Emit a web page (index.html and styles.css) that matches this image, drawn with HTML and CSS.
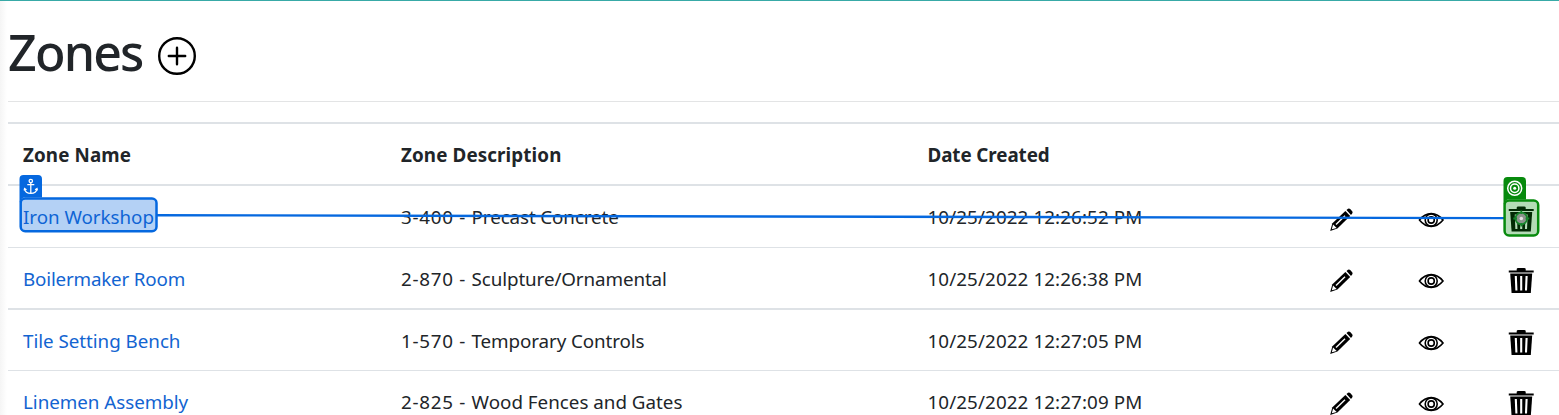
FILE: index.html
```html
<!DOCTYPE html>
<html lang="en">
<head>
<meta charset="utf-8">
<title>Zones</title>
<link rel="stylesheet" href="styles.css">
</head>
<body>
<svg class="defs" width="0" height="0" aria-hidden="true">
  <symbol id="pencil" viewBox="0 0 24 24">
    <path d="M1 23 3.2 15.2 16.2 3.1 21 8 8.2 20.5Z"/>
    <path d="M17.3 2.1 18.8.8Q19.9 0 21 1L23 3.2Q23.9 4.3 23 5.4L21.8 7Z"/>
    <path class="cut" d="M6.8 16.5 15.8 7.8" />
    <path class="hole" d="M3.9 16.6 7.4 19.9 2.6 21.3Z"/>
  </symbol>
  <symbol id="eye" viewBox="0 0 26 16">
    <path class="line" d="M1.2 8Q6.3 1.6 13 1.6T24.8 8Q19.7 14.4 13 14.4T1.2 8Z"/>
    <circle class="line" cx="13" cy="8" r="6"/>
    <circle class="line" cx="13" cy="8" r="3.1"/>
  </symbol>
  <symbol id="trash" viewBox="0 0 26 26">
    <path d="M.5 3H8.5V1.6Q8.5.5 10 .5H16Q17.5.5 17.5 1.6V3H25.5V5H.5Z"/>
    <path d="M2 6H24L22.6 25.5H3.4Z"/>
    <path class="cut" d="M7.6 8.5 8.2 23M13 8.5V23M18.4 8.5 17.8 23"/>
  </symbol>
</svg>
<main class="page">
  <header class="heading">
    <h1 class="title">Zones</h1>
    <svg class="add" viewBox="0 0 38 38"><circle cx="19" cy="19" r="17.8"/><path d="M19 10.8V27.2M10.8 19H27.2"/></svg>
  </header>
  <div class="table">
    <div class="row head"><span>Zone Name</span><span>Zone Description</span><span class="created">Date Created</span></div>
    <div class="row first"><a>Iron Workshop</a><span class="desc"><span class="code">3-400 - </span>Precast Concrete</span><span class="date">10/25/2022 12:26:52 PM</span><svg class="pencil"><use href="#pencil"/></svg><svg class="eye"><use href="#eye"/></svg><svg class="trash"><use href="#trash"/></svg></div>
    <div class="row second"><a class="tight">Boilermaker Room</a><span class="desc"><span class="code">2-870 - </span>Sculpture/Ornamental</span><span class="date">10/25/2022 12:26:38 PM</span><svg class="pencil"><use href="#pencil"/></svg><svg class="eye"><use href="#eye"/></svg><svg class="trash"><use href="#trash"/></svg></div>
    <div class="row third"><a>Tile Setting Bench</a><span class="desc"><span class="code">1-570 - </span>Temporary Controls</span><span class="date">10/25/2022 12:27:05 PM</span><svg class="pencil"><use href="#pencil"/></svg><svg class="eye"><use href="#eye"/></svg><svg class="trash"><use href="#trash"/></svg></div>
    <div class="row fourth"><a>Linemen Assembly</a><span><span class="code">2-825 - </span>Wood Fences and Gates</span><span class="date">10/25/2022 12:27:09 PM</span><svg class="pencil"><use href="#pencil"/></svg><svg class="eye"><use href="#eye"/></svg><svg class="trash"><use href="#trash"/></svg></div>
  </div>
</main>
<svg class="overlay" viewBox="0 0 1559 415">
  <path class="link" d="M157 215.2 1504 218.1"/>
  <rect class="anchor-box" x="20.7" y="198.6" width="135.8" height="32.6" rx="4.5"/>
  <path class="anchor-tab" d="M19.5 203V179Q19.5 175 23.5 175H38Q42 175 42 179V197.5H24Q21 198 19.5 203Z"/>
  <g class="anchor-icon"><circle cx="30.8" cy="181" r="1.7"/><path d="M30.8 182.8V193.3M27.3 184.7H34.3M24.6 188.8Q25.3 193.3 30.8 193.3T37 188.8M24.2 190.5 24.6 188.5 26.5 189.8M37.4 190.5 37 188.5 35.1 189.8"/></g>
  <rect class="target-box" x="1504.6" y="200.6" width="33.6" height="34.8" rx="4.5"/>
  <path class="target-tab" d="M1503.5 205V181Q1503.5 177 1507.5 177H1522Q1526 177 1526 181V199.5H1508Q1505 200 1503.5 205Z"/>
  <g class="target-icon"><circle cx="1514.7" cy="188.3" r="7"/><circle cx="1514.7" cy="188.3" r="4.2"/><circle class="dot" cx="1514.7" cy="188.3" r="1.5"/></g>
  <g class="marker"><circle cx="1521.3" cy="218.5" r="5.8"/><path d="M1521.3 210.5V214M1521.3 223V226.5M1513.3 218.5H1517M1525.6 218.5H1529.3"/><circle class="dot" cx="1521.3" cy="218.5" r="1.8"/></g>
</svg>
</body>
</html>
```
FILE: styles.css
```css
* { box-sizing: border-box; }
body {
  margin: 0;
  height: 415px;
  overflow: hidden;
  position: relative;
  border-top: 1px solid #38aaa7;
  background: linear-gradient(90deg, #f5f5f5, #fff 7px);
  color: #212529;
  font: 18.8px/28px "Noto Sans", "Open Sans", sans-serif;
}
.defs { position: absolute; }
.page { padding-left: 8px; }
.heading {
  display: flex;
  align-items: flex-start;
  height: 101px;
  padding-top: 21px;
  border-bottom: 1px solid #e3e4e5;
}
.title {
  width: 150px;
  margin: 0;
  font-size: 50px;
  font-weight: 550;
  line-height: 60px;
  letter-spacing: -1.8px;
}
.add { width: 38px; height: 38px; margin-top: 15px; fill: none; stroke: #000; stroke-width: 2.4; stroke-linecap: round; }
.table { margin-top: 20px; }
.row {
  display: grid;
  grid-template-columns: 378px 526.5px 401.5px 90px 90px 26px;
  align-items: start;
  height: 62px;
  padding: 17px 0 0 15px;
  border-top: 1px solid #dee2e6;
  white-space: nowrap;
}
.row > span, .row > a { justify-self: start; }
.head { border-top-width: 2px; font-weight: 700; letter-spacing: .12px; }
.created { letter-spacing: -.08px; }
.first { height: 63px; border-top-width: 2px; }
.second { height: 61px; }
.third { border-top-width: 2px; }
a { color: #1264d1; letter-spacing: -.03px; }
.tight { letter-spacing: -.18px; }
.desc { letter-spacing: -.1px; }
.code { letter-spacing: .72px; }
.date { letter-spacing: .1px; }
.pencil { width: 24px; height: 24px; margin-top: 4px; }
.eye { width: 26px; height: 16px; margin: 8px 0 0 -1px; }
.trash { width: 26px; height: 26px; margin: 2px 0 0 -1px; }
.row svg { transform: translate(.2px, 0); }
.row .trash { transform: translate(.2px, .5px); }
.first svg, .first .trash { transform: translate(.2px, 1px); }
.cut { fill: none; stroke: #fff; stroke-width: 2.1; }
#pencil .cut { stroke-width: 1.4; }
.hole { fill: #fff; }
.line { fill: none; stroke: #000; stroke-width: 1.6; }
.overlay { position: absolute; top: -1px; left: 0; width: 1559px; height: 415px; }
.link { stroke: #0568df; stroke-width: 2.4; }
.anchor-box { fill: #0568df; fill-opacity: .3; stroke: #0568df; stroke-width: 2.5; }
.anchor-tab { fill: #0568df; }
.anchor-icon { fill: none; stroke: #fff; stroke-width: 1.3; }
.target-box { fill: #078a0d; fill-opacity: .3; stroke: #078a0d; stroke-width: 2.5; }
.target-tab { fill: #078a0d; }
.target-icon { fill: none; stroke: #fff; stroke-width: 1.5; }
.target-icon .dot { fill: #fff; stroke: none; }
.marker { fill: #8b938b; stroke: #16852a; stroke-width: 1.8; }
.marker .dot { fill: #e2e2e2; stroke: none; }
```
